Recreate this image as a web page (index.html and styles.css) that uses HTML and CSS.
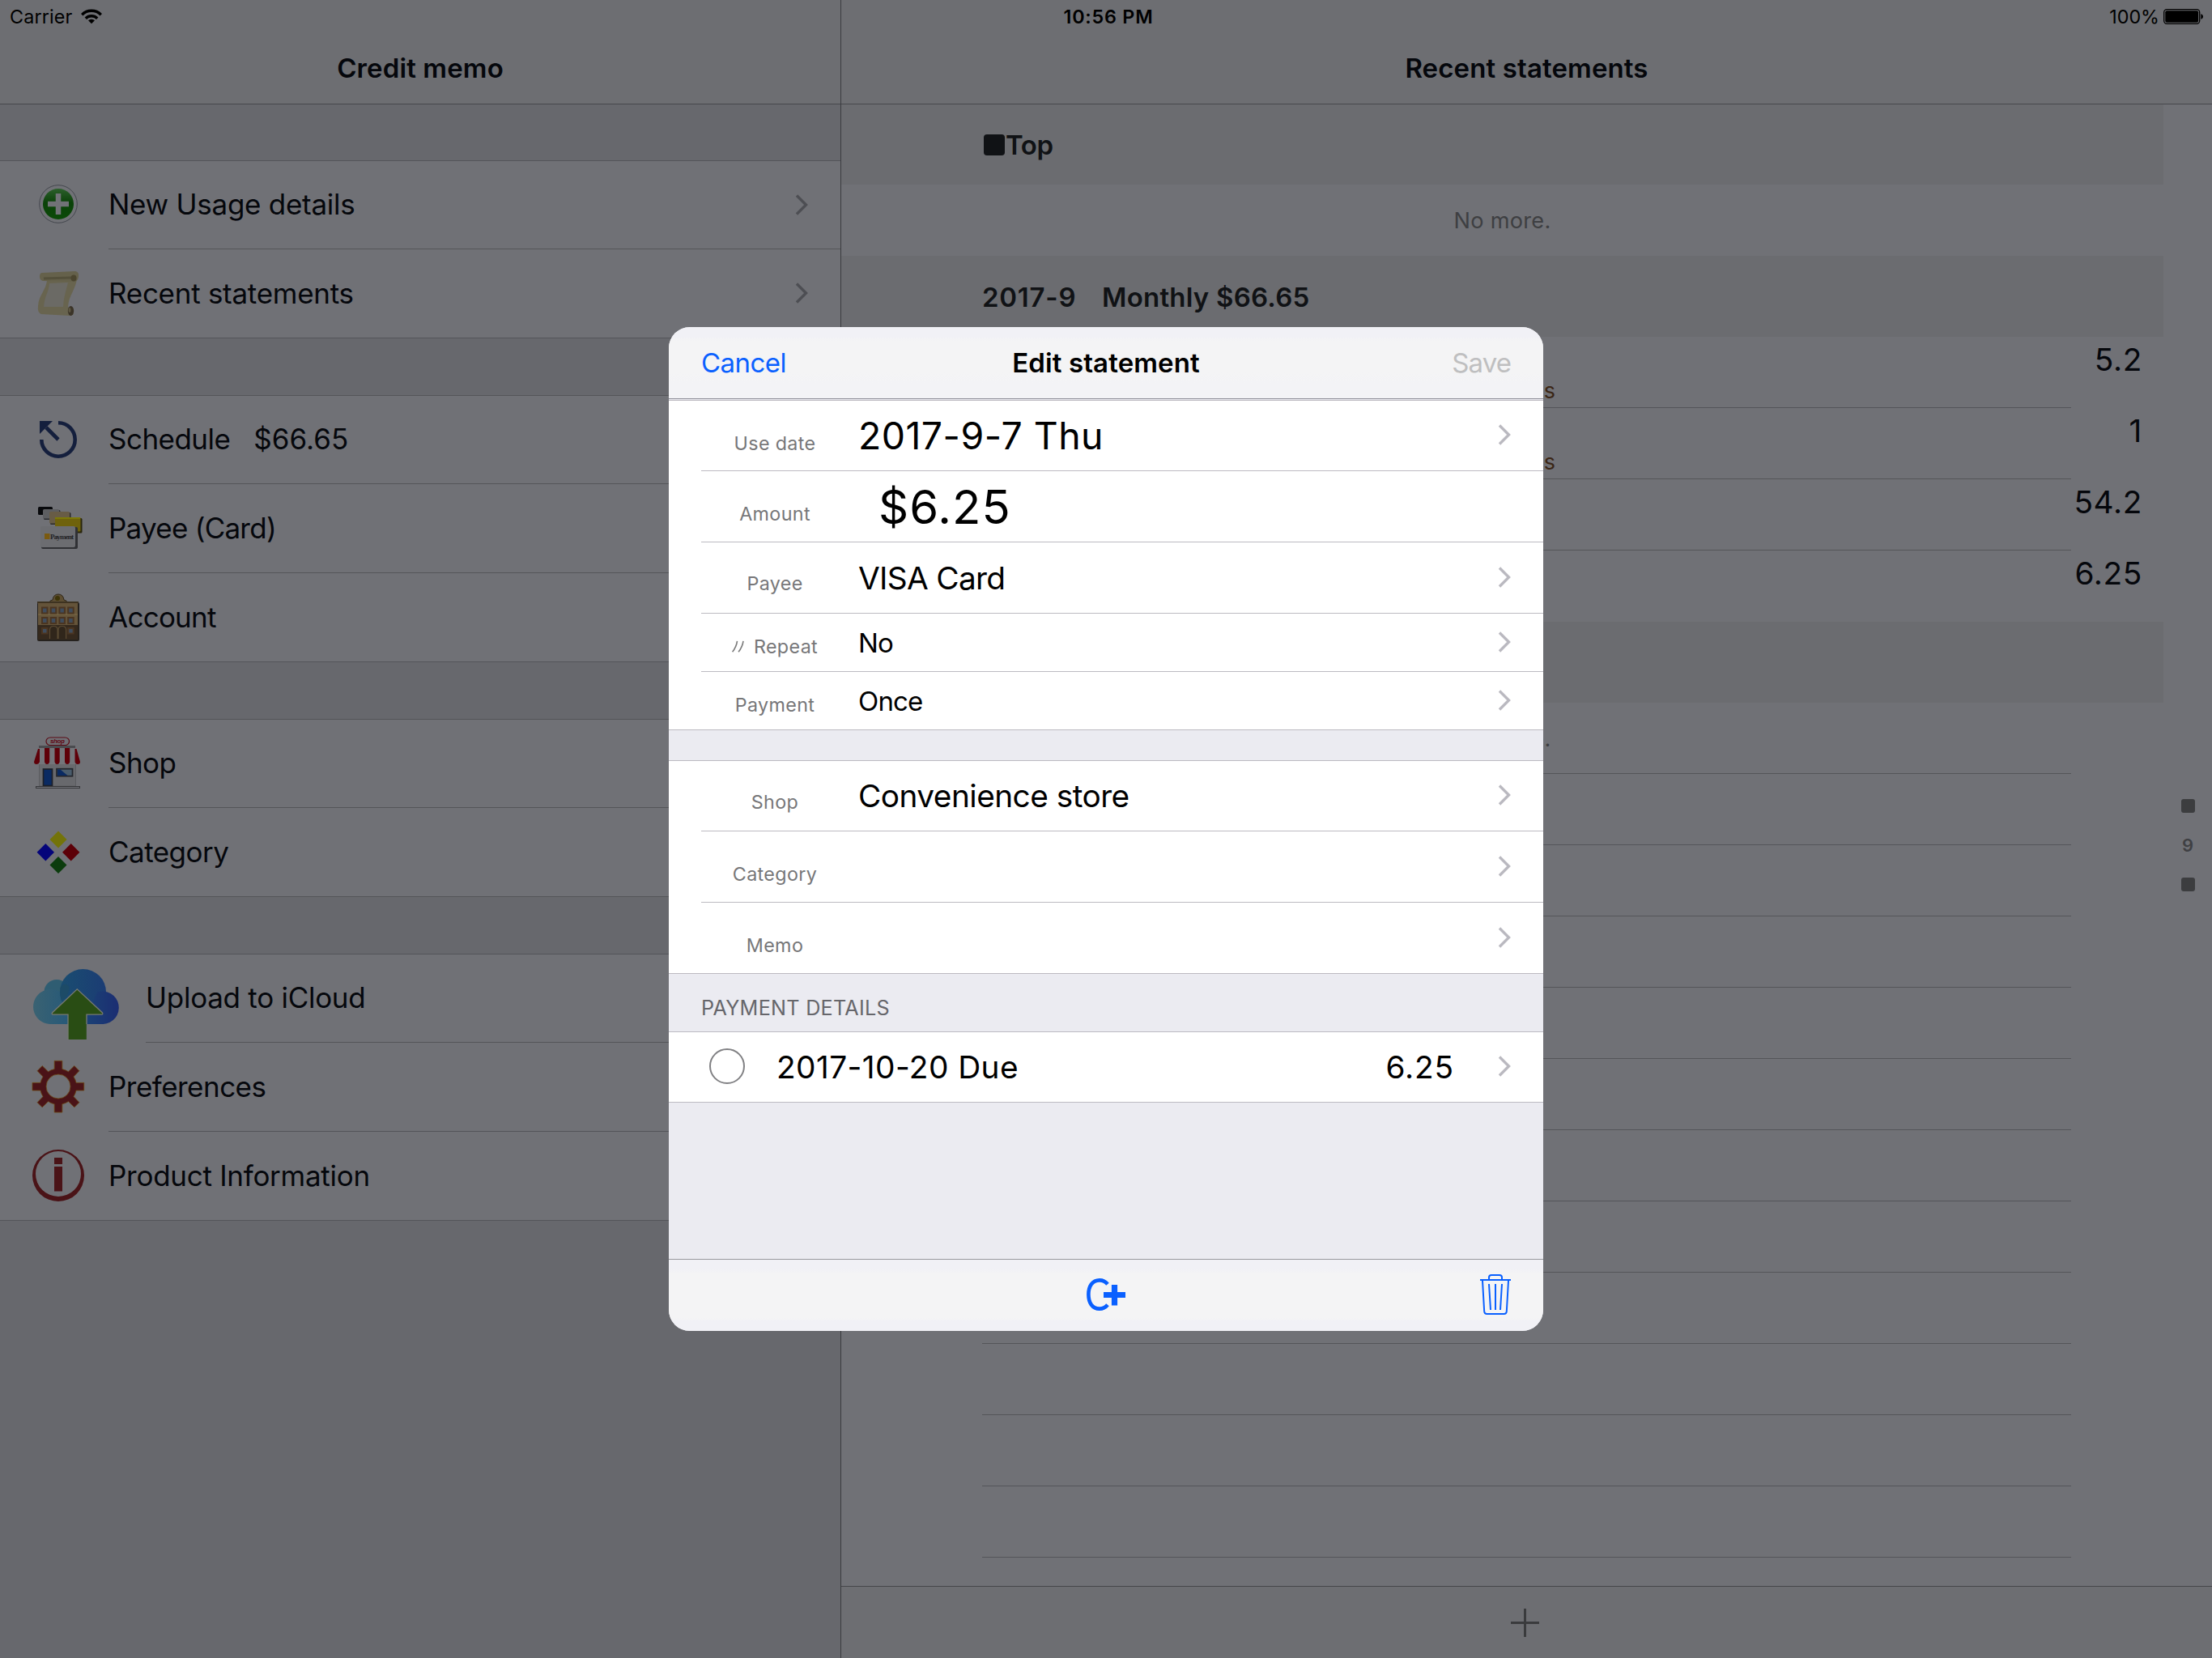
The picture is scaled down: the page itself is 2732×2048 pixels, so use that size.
FILE: index.html
```html
<!DOCTYPE html>
<html lang="en">
<head>
<meta charset="utf-8">
<title>Credit memo</title>
<link rel="stylesheet" href="styles.css">
</head>
<body>
<svg class="defs" aria-hidden="true">
  <symbol id="chevron" viewBox="0 0 16 26"><path d="M2 1.5 13.5 13 2 24.5" fill="none" stroke="currentColor" stroke-width="3.4"/></symbol>
  <linearGradient id="g-plus" x1="0" y1="0" x2="0" y2="1"><stop offset="0" stop-color="#2c5f2c"/><stop offset=".45" stop-color="#0b4209"/><stop offset="1" stop-color="#0b4a08"/></linearGradient>
  <linearGradient id="g-left" x1="0" y1="0" x2="1" y2="0"><stop offset="0" stop-color="#3a6272"/><stop offset="1" stop-color="#22577a"/></linearGradient>
  <linearGradient id="g-big" x1="0" y1="0" x2="1" y2="0"><stop offset="0" stop-color="#1a4d70"/><stop offset="1" stop-color="#1b3c74"/></linearGradient>
  <linearGradient id="g-right" x1="0" y1="0" x2="1" y2="0"><stop offset="0" stop-color="#1b4a76"/><stop offset="1" stop-color="#1b2d72"/></linearGradient>
</svg>
<div class="app">
  <header class="status">
    <div class="status-left"><span>Carrier</span>
      <svg width="26" height="19" viewBox="0 0 26 19"><g fill="none" stroke="#000" stroke-width="3.4"><path d="M1.2 7.2a16.6 16.6 0 0 1 23.6 0"/><path d="M5.8 11.8a10.2 10.2 0 0 1 14.4 0"/></g><path d="M13 18.2 9 14.3a5.7 5.7 0 0 1 8 0z"/></svg></div>
    <span class="status-time">10:56 PM</span>
    <div class="status-right"><span>100%</span>
      <svg width="50" height="19" viewBox="0 0 50 19"><rect x=".7" y=".7" width="44" height="17.6" rx="3.5" fill="none" stroke="#000" stroke-width="1.3"/><rect x="2.3" y="2.3" width="40.8" height="14.4" rx="2"/><path d="M46.3 6.3c3.6.6 3.6 5.8 0 6.400z"/></svg></div>
  </header>
  <aside class="master">
    <div class="navbar"><h1>Credit memo</h1></div>
    <ul class="group">
      <li class="row"><svg class="icon" viewBox="0 199 134 108"><circle cx="72" cy="252" r="23.300" fill="#717277" stroke="#44474e" stroke-width="1"/><circle cx="72" cy="252" r="19" fill="url(#g-plus)"/><path d="M59 252h26M72 239v26" stroke="#717277" stroke-width="6.500"/></svg><span class="label wide">New Usage details</span><svg class="chev"><use href="#chevron"/></svg></li>
      <li class="row"><svg class="icon" viewBox="0 308 134 109"><path d="M58 347 95 345C93 358 85 365 84 379L91 388 87 390 51 388Q46 386 47 378C48 364 56 360 58 347z" fill="#68644f"/><path d="M61 350 84 349C82 358 79 365 78 379L54 379C55 365 60 362 61 350z" fill="#6b6a65"/><path d="M52 337 93 335Q98 336 97 342 96 348 91 348L53 347Q49 346 49 342 49 337 52 337z" fill="#65614b"/><path d="M54 344 88 343" stroke="#54503b" stroke-width="3"/><ellipse cx="91" cy="343.500" rx="3.500" ry="4" fill="#4b452f"/><ellipse cx="87.500" cy="384" rx="3.700" ry="6" fill="#3b3428"/><ellipse cx="86" cy="383" rx="1.500" ry="3" fill="#5e5843"/></svg><span class="label wide">Recent statements</span><svg class="chev"><use href="#chevron"/></svg></li>
    </ul>
    <ul class="group">
      <li class="row"><svg class="icon" viewBox="0 489 134 108"><path d="M72 522.300A20.700 20.700 0 1 1 51.300 543M57 528 72 543" fill="none" stroke="#141f3d" stroke-width="4.600"/><path d="M49 520h16L49 536z" fill="#141f3d"/></svg><span class="label schedule"><span>Schedule</span><span class="total">$66.65</span></span></li>
      <li class="row"><svg class="icon" viewBox="0 598 134 109"><rect x="47" y="626" width="18" height="10" rx="1.500" fill="#08090c"/><rect x="54" y="630" width="20.500" height="12" rx="1.500" fill="#2b2c30"/><rect x="53" y="629" width="20" height="11.500" rx="1.500" fill="#5d5e61"/><rect x="62" y="633" width="25.500" height="15" rx="1.500" fill="#2b2a28"/><rect x="61" y="632" width="25" height="14.500" rx="1.500" fill="#685c46"/><rect x="69" y="640" width="32.500" height="18.500" rx="1.500" fill="#29260c"/><rect x="68" y="639" width="31.500" height="17.500" rx="1" fill="#6f620c"/><path d="M68 640h31" stroke="#7d7a08" stroke-width="2"/><rect x="51" y="651" width="45" height="27" rx="2" fill="#303135"/><rect x="50" y="650" width="43" height="26" rx="2" fill="#6c6d71"/><rect x="55" y="659" width="6.500" height="7" fill="#7a5a10"/><text x="62" y="666" textLength="29" class="card-text">Payment</text></svg><span class="label tight">Payee (Card)</span></li>
      <li class="row"><svg class="icon" viewBox="0 708 134 109"><rect x="46" y="744" width="52" height="48" rx="2" fill="#26221e"/><path d="M61 744q0-2 4-3 1-7 7-7t7 7q4 1 4 3z" fill="#5d4e33" stroke="#2e2618"/><circle cx="71" cy="739" r="3" fill="#3d3408"/><rect x="47" y="744" width="49" height="29" fill="#64543a"/><path d="M46 744h51" stroke="#3e3321" stroke-width="2"/><path d="M47 759h49" stroke="#766445" stroke-width="1.500"/><rect x="47" y="772" width="49" height="18" fill="#35291d"/><g fill="#3f4c5c" stroke="#4a3522" stroke-width="2"><path d="M52 750.500h6.500v7H52zM62.700 750.500h6.500v7h-6.500zM73.400 750.500h6.500v7h-6.500zM84.200 750.500h6.500v7h-6.500z"/><path d="M52 763h6.500v7H52zM62.700 763h6.500v7h-6.500zM73.400 763h6.500v7h-6.500zM84.200 763h6.500v7h-6.500zM52 776h6.500v6.500H52zM84.200 776h6.500v6.500h-6.500z"/></g><path d="M61.500 789v-11q0-4.500 4.800-4.500t4.800 4.500v11M72 789v-11q0-4.500 4.800-4.500t4.800 4.500v11" fill="#30261b" stroke="#5b4b33" stroke-width="1.200"/></svg><span class="label tight">Account</span></li>
    </ul>
    <ul class="group">
      <li class="row"><svg class="icon" viewBox="0 889 134 108"><rect x="57" y="911" width="28.500" height="9.500" rx="5" fill="#707176" stroke="#5b0a14" stroke-width="1.200"/><text x="62" y="918" textLength="18" class="shop-text">shop</text><path d="M48 922.500h45" stroke="#4a4b4f" stroke-width="3"/><rect x="48.500" y="943" width="45" height="28" fill="#68696d" stroke="#5b5c60"/><path d="M48 924h45l6 17q0 3-3 3H45q-3 0-3-3z" fill="#74757a"/><g fill="#5f0009"><path d="M47 925h2v16q-1 3-4 3t-3-3zM55 924h6.200v17q-.6 3-3.100 3t-3.100-3zM67.500 924h6.200v17q-.6 3-3.100 3t-3.100-3zM80 924h6.200v17q-.6 3-3.100 3t-3.100-3zM92.500 925h2L99 941q0 3-3 3t-3.500-3z"/></g><rect x="53.500" y="950" width="11" height="20.500" fill="#0a2a62" stroke="#1e2129" stroke-width="1.700"/><rect x="70" y="949.700" width="19.500" height="9" fill="#4a5c6c" stroke="#23262c" stroke-width="1.700"/><path d="M71 950.500h3.500l9 7.500H71z" fill="#0a2a62"/><rect x="44.500" y="971.500" width="54" height="2" fill="#707176" stroke="#36373a"/></svg><span class="label">Shop</span></li>
      <li class="row"><svg class="icon" viewBox="0 998 134 109"><path d="M72 1026.500 82.500 1037 72 1047.500 61.500 1037z" fill="#73730a"/><path d="M56.300 1042 67 1052.700 56.300 1063.400 45.600 1052.700z" fill="#05057a"/><path d="M87.700 1042 98.400 1052.700 87.700 1063.400 77 1052.700z" fill="#5c0008"/><path d="M72 1058 82.500 1068.500 72 1079 61.500 1068.500z" fill="#0b3c0d"/></svg><span class="label">Category</span></li>
    </ul>
    <ul class="group">
      <li class="row row-cloud"><svg class="icon" viewBox="0 1179 180 108"><circle cx="70" cy="1225.500" r="15.500" fill="#2f5d72"/><path d="M62.700 1265a21.500 21.500 0 1 1 18-33l14 10v23z" fill="url(#g-left)"/><circle cx="102.500" cy="1225.500" r="28.500" fill="url(#g-big)"/><path d="M90 1240 110 1250 120 1225.500A20.300 20.300 0 1 1 127.500 1265H90z" fill="url(#g-right)"/><path d="M74.500 1220q5-8 11-1 0 12-10 17-2-8-1-16z" fill="#1d4b67"/><path d="M95.300 1222 127 1251.500V1253H106.800V1284H84V1253H64V1251.500z" fill="#294d14"/><path d="M84 1284V1253.200H65.500Q63.500 1253 64.500 1251L95.300 1221.800 126.500 1251Q127.500 1253 125.500 1253.200H107V1265" fill="none" stroke="#777a72" stroke-width="1.300"/></svg><span class="label wide">Upload to iCloud</span></li>
      <li class="row"><svg class="icon" viewBox="0 1288 134 109"><g fill="#4a1317" stroke="#6b4510" stroke-width=".8"><path d="M67.200 1310.400h9.600v10.200a22 22 0 0 1 7.700 3.200l7.300-7.200 6.100 6.100-7 7.200a22 22 0 0 1 3.100 7.500h9.700v9.600h-9.700a22 22 0 0 1-3.100 7.500l7 7.200-6.100 6.100-7.300-7.200a22 22 0 0 1-7.700 3.200v10.200h-9.600v-10.200a22 22 0 0 1-7.700-3.200l-7.300 7.200-6.100-6.100 7-7.200a22 22 0 0 1-3.100-7.500h-10v-9.600h10a22 22 0 0 1 3.100-7.500l-7-7.200 6.100-6.100 7.300 7.200a22 22 0 0 1 7.700-3.200z"/></g><circle cx="72" cy="1342" r="15" fill="#707176" stroke="#6b4510" stroke-width=".8"/></svg><span class="label">Preferences</span></li>
      <li class="row"><svg class="icon" viewBox="0 1398 134 109"><path fill="#4a1317" fill-rule="evenodd" d="M72 1420a32 32 0 1 1 0 64 32 32 0 1 1 0-64zM72 1422a28 28 0 1 0 0 56 28 28 0 1 0 0-56zM67 1430h10v8H67zM67 1441h10v30.500H67z"/></svg><span class="label wide">Product Information</span></li>
    </ul>
  </aside>
  <main class="detail">
    <div class="navbar"><h1>Recent statements</h1></div>
    <div class="table">
      <h2 class="section"><i class="block"></i><span class="top">Top</span></h2>
      <p class="more">No more.</p>
      <h2 class="section"><span class="month">2017-9</span><span>Monthly $66.65</span></h2>
      <div class="entry lined"><span class="shopname">es</span><span class="amount">5.2</span></div>
      <div class="entry lined"><span class="shopname">es</span><span class="amount">1</span></div>
      <div class="entry lined"><span class="amount">54.2</span></div>
      <div class="entry"><span class="amount">6.25</span></div>
      <h2 class="section"></h2>
      <p class="more lined">No more.</p>
      <div class="blank lined"></div><div class="blank lined"></div><div class="blank lined"></div><div class="blank lined"></div><div class="blank lined"></div><div class="blank lined"></div><div class="blank lined"></div><div class="blank lined"></div><div class="blank lined"></div><div class="blank lined"></div><div class="blank lined"></div>
    </div>
    <nav class="index"><i></i><span>9</span><i></i></nav>
    <footer class="toolbar"><svg width="35" height="35" viewBox="0 0 35 35"><path d="M0 17.500h35M17.500 0v35" stroke="#3a3b3d" stroke-width="3"/></svg></footer>
  </main>
</div>
<div class="overlay">
  <section class="modal">
    <header class="modal-nav"><a class="cancel">Cancel</a><h1>Edit statement</h1><a class="save">Save</a></header>
    <div class="form">
      <div class="fields">
        <div class="field d8"><label>Use date</label><span class="value date">2017-9-7 Thu</span><svg class="chev"><use href="#chevron"/></svg></div>
        <div class="field d8"><label>Amount</label><span class="value money">$6.25</span></div>
        <div class="field d6"><label>Payee</label><span class="value">VISA Card</span><svg class="chev"><use href="#chevron"/></svg></div>
        <div class="field short"><label><svg class="ditto" width="15" height="15" viewBox="0 0 15 15"><path d="M.6 14.200Q5.500 8 6.500.8M8.100 14.200Q13 8 14 .8" fill="none" stroke="#7a7a7a" stroke-width="1.600"/></svg><span>Repeat</span></label><span class="value">No</span><svg class="chev"><use href="#chevron"/></svg></div>
        <div class="field short"><label>Payment</label><span class="value">Once</span><svg class="chev"><use href="#chevron"/></svg></div>
      </div>
      <div class="fields spaced">
        <div class="field d6"><label>Shop</label><span class="value store">Convenience store</span><svg class="chev"><use href="#chevron"/></svg></div>
        <div class="field d8"><label>Category</label><span class="value"></span><svg class="chev"><use href="#chevron"/></svg></div>
        <div class="field d8"><label>Memo</label><span class="value"></span><svg class="chev"><use href="#chevron"/></svg></div>
      </div>
      <h2 class="form-title">PAYMENT DETAILS</h2>
      <div class="fields">
        <div class="field"><i class="check"></i><span class="value due">2017-10-20 Due</span><span class="sum">6.25</span><svg class="chev"><use href="#chevron"/></svg></div>
      </div>
    </div>
    <footer class="modal-bar">
      <svg class="copy" width="48" height="40" viewBox="0 0 48 40"><path d="M26 7.300Q22 2.400 16 2.400C7 2.400 2.400 10 2.400 20S7 37.600 16 37.600Q22 37.600 26 32.700" fill="none" stroke="#0a60ff" stroke-width="4.600"/><path d="M21 20.500h27M34.500 8v25.500" stroke="#0a60ff" stroke-width="7.200"/></svg>
      <svg class="trash" width="38" height="50" viewBox="0 0 38 50"><g fill="none" stroke="#0a60ff" stroke-width="2"><path d="M0 7h38M11 7V4q0-3 3-3h10q3 0 3 3v3M3 8 5.200 46q.3 3 3.300 3h21q3 0 3.300-3L35 8M11 12l2 32M19 12v32M27 12l-2 32"/></g></svg>
    </footer>
  </section>
</div>
</body>
</html>
```
FILE: styles.css
```css
* { box-sizing: border-box; margin: 0; padding: 0; }
body { width: 2732px; height: 2048px; overflow: hidden; font-family: Inter, "Liberation Sans", sans-serif; background: #707176; color: #05070c; }
ul { list-style: none; }
i { display: block; }
.defs { position: absolute; width: 0; height: 0; }
.app { display: grid; grid-template-columns: 1039px 1fr; height: 2048px; position: relative; }

/* Status bar */
.status { position: absolute; inset: 0 0 auto 0; height: 40px; display: grid; grid-template-columns: 1fr auto 1fr; align-items: center; font-size: 23.3px; color: #000; }
.status-left, .status-right { display: flex; align-items: center; }
.status-left { padding-left: 12px; gap: 11px; letter-spacing: .15px; }
.status-right { justify-content: flex-end; padding-right: 10px; gap: 5px; }
.status-time { font-weight: 600; letter-spacing: .8px; padding-left: 6px; }

.navbar { height: 129px; padding-top: 40px; display: flex; align-items: center; justify-content: center; background: #6d6e72; border-bottom: 1px solid #46474b; }
h1 { font-size: 33px; font-weight: 600; letter-spacing: .12px; }

/* Master list */
.master { background: #67686d; border-right: 1px solid #3a3b3f; }
.group { background: #707176; border: solid #545559; border-width: 1px 0; margin-bottom: 70px; }
.navbar + .group { margin-top: 69px; }
.row { display: flex; align-items: center; height: 110px; padding-bottom: 1px; background: linear-gradient(#545559, #545559) no-repeat 134px 100% / 100% 1px; }
.row:first-child { height: 109px; }
.row:last-child { height: 109px; padding-bottom: 0; background: none; }
.row-cloud { background-position-x: 180px; }
.icon { width: 134px; height: 100%; flex: none; }
.row-cloud .icon { width: 180px; }
.label { flex: 1; height: 100%; padding-bottom: 2px; display: flex; align-items: center; font-size: 35px; letter-spacing: -.53px; }
.label.wide { letter-spacing: -.27px; }
.label.tight { letter-spacing: -.75px; }
.row .chev { color: #4d4e53; margin: 0 40px 1px 0; }
.schedule { gap: 29px; }
.total { letter-spacing: 0; }
.chev { width: 16px; height: 26px; flex: none; }
.card-text { font: 700 9px "Liberation Serif", serif; fill: #222226; }
.shop-text { font: italic 700 8px "Liberation Sans", sans-serif; fill: #5f0612; }

/* Detail table */
.detail { display: grid; grid-template: 129px 1830px 89px / 1633px 1fr; }
.detail .navbar, .toolbar { grid-column: 1 / 3; }
.table { overflow: hidden; }
.section { height: 100px; padding: 1px 0 0 174px; display: flex; align-items: center; background: #6b6c70; font-size: 33px; font-weight: 600; letter-spacing: .22px; color: #101215; }
.section:first-child { height: 99px; }
.block { width: 26px; height: 26px; border-radius: 4px; background: #101215; margin-left: 2px; }
.top { margin-left: 1px; letter-spacing: -.4px; }
.month { width: 148px; letter-spacing: .75px; }
.more { height: 88px; display: flex; align-items: center; justify-content: center; font-size: 27.2px; letter-spacing: .26px; color: #3e3f42; }
.blank { height: 88px; }
.lined { background: linear-gradient(#545559, #545559) no-repeat 174px 100% / 1345px 1px; }
.entry { height: 88px; display: flex; }
.shopname { padding-left: 852px; font-size: 27px; line-height: 134px; color: #3b2615; }
.amount { margin-left: auto; font-size: 38.8px; letter-spacing: .6px; line-height: 56px; padding-right: 26px; }
.index { display: flex; flex-direction: column; align-items: center; justify-content: center; font-size: 22px; line-height: 80px; font-weight: 600; color: #3f4043; }
.index i { width: 17px; height: 17px; border-radius: 3px; background: #3c3d3f; }
.toolbar { display: flex; align-items: center; justify-content: center; padding-right: 4px; background: #6d6e72; border-top: 1px solid #46474b; }

/* Edit sheet */
.overlay { position: absolute; inset: 0; display: flex; align-items: center; justify-content: center; }
.modal { width: 1080px; height: 1240px; border-radius: 26px; overflow: hidden; background: #ebebf1; color: #000; display: flex; flex-direction: column; }
.modal-nav { height: 89px; flex: none; display: grid; grid-template-columns: 1fr auto 1fr; align-items: center; padding: 0 40px; background: linear-gradient(#f1f1f6 0, #f1f1f6 12px, #f4f4f5 17px, #f4f4f5 55px, #f3f3f6 70px); border-bottom: 1px solid #8e8e98; font-size: 33px; }
.cancel { color: #0a60ff; letter-spacing: -.54px; }
.save { color: #bfbfc0; text-align: right; letter-spacing: -.9px; }
.form { flex: 1; padding-top: 1px; }
.fields { background: #fff; border-top: 1px solid #bcbac1; border-bottom: 1px solid #bcbac1; }
.spaced { margin-top: 37px; }
.field { height: 88px; padding: 0 0 1px 40px; display: flex; align-items: center; background: linear-gradient(#bcbac1, #bcbac1) no-repeat 40px 100% / 100% 1px; }
.field:first-child { height: 87px; }
.field.short { height: 72px; }
.field:last-child { margin-bottom: -1px; background: none; }
label { width: 182px; padding-top: 10px; display: flex; justify-content: center; align-items: center; gap: 12px; font-size: 23.3px; letter-spacing: .35px; color: #777779; }
.value { flex: 1; padding-left: 12px; font-size: 38.8px; letter-spacing: -.7px; }
.field .chev { color: #bab9c0; margin: 0 40px 2px 0; }
.d8 label { padding-top: 18px; }
.d6 label { padding-top: 14px; }
.date { font-size: 46.4px; letter-spacing: .48px; }
.money { font-size: 58px; padding: 1px 0 0 37px; letter-spacing: 1.05px; }
.short .value { font-size: 33px; letter-spacing: -.85px; }
.store { letter-spacing: -.54px; padding-bottom: 2px; }
.form-title { height: 71px; padding: 27px 0 0 40px; font-size: 25.2px; font-weight: 400; letter-spacing: .26px; color: #66666b; }
.check { width: 44px; height: 44px; border: 2px solid #808083; border-radius: 50%; margin: 0 27px 3px 10px; }
.due { letter-spacing: .42px; padding-bottom: 2px; }
.sum { font-size: 38.8px; letter-spacing: .85px; margin-right: 54px; padding-bottom: 2px; }
.modal-bar { height: 89px; display: flex; align-items: center; justify-content: flex-end; padding: 0 40px 2px 516px; background: linear-gradient(#f1f1f6 0, #f1f1f6 12px, #f4f4f5 17px, #f4f4f5 72px, #f1f1f6 76px); border-top: 1px solid #97989d; }
.copy { margin-right: auto; }
```
